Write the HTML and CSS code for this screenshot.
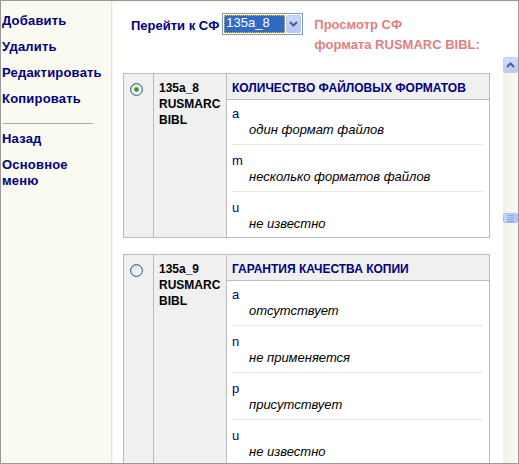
FILE: index.html
```html
<!DOCTYPE html>
<html lang="ru">
<head>
<meta charset="utf-8">
<title>Просмотр СФ</title>
<link rel="stylesheet" href="styles.css">
</head>
<body>
<div class="frame">
  <nav class="sidebar">
    <a class="nav-link" href="#">Добавить</a>
    <a class="nav-link" href="#">Удалить</a>
    <a class="nav-link" href="#">Редактировать</a>
    <a class="nav-link" href="#">Копировать</a>
    <hr class="nav-sep">
    <a class="nav-link" href="#">Назад</a>
    <a class="nav-link" href="#">Основное меню</a>
  </nav>
  <main class="main">
    <header class="topbar">
      <span class="goto-label">Перейти к СФ</span>
      <div class="select">
        <span class="select-value">135a_8</span>
        <span class="select-btn">
          <svg width="9" height="6" viewBox="0 0 9 6"><path d="M1 1 L4.5 4.5 L8 1" fill="none" stroke="#4d6185" stroke-width="2"/></svg>
        </span>
      </div>
      <div class="view-title">Просмотр СФ<br>формата RUSMARC BIBL:</div>
    </header>
    <div class="pane">
      <div class="content">
        <section class="field">
          <div class="cell-radio">
            <svg class="radio" width="13" height="13" viewBox="0 0 13 13">
              <defs><linearGradient id="rg1" x1="0" y1="0" x2="1" y2="1"><stop offset="0" stop-color="#dcdcd7"/><stop offset="1" stop-color="#ffffff"/></linearGradient></defs>
              <circle cx="6.5" cy="6.5" r="5.9" fill="url(#rg1)" stroke="#1c5180" stroke-width="1"/>
              <circle cx="6.5" cy="6.5" r="2.3" fill="#21a121"/>
            </svg>
          </div>
          <div class="cell-code">135a_8<br>RUSMARC<br>BIBL</div>
          <div class="cell-body">
            <div class="field-title">КОЛИЧЕСТВО ФАЙЛОВЫХ ФОРМАТОВ</div>
            <div class="items">
              <div class="item"><div class="item-code">a</div><div class="item-desc">один формат файлов</div></div>
              <div class="item"><div class="item-code">m</div><div class="item-desc">несколько форматов файлов</div></div>
              <div class="item"><div class="item-code">u</div><div class="item-desc">не известно</div></div>
            </div>
          </div>
        </section>
        <section class="field">
          <div class="cell-radio">
            <svg class="radio" width="13" height="13" viewBox="0 0 13 13">
              <defs><linearGradient id="rg2" x1="0" y1="0" x2="1" y2="1"><stop offset="0" stop-color="#dcdcd7"/><stop offset="1" stop-color="#ffffff"/></linearGradient></defs>
              <circle cx="6.5" cy="6.5" r="5.9" fill="url(#rg2)" stroke="#1c5180" stroke-width="1"/>
            </svg>
          </div>
          <div class="cell-code">135a_9<br>RUSMARC<br>BIBL</div>
          <div class="cell-body">
            <div class="field-title">ГАРАНТИЯ КАЧЕСТВА КОПИИ</div>
            <div class="items">
              <div class="item"><div class="item-code">a</div><div class="item-desc">отсутствует</div></div>
              <div class="item"><div class="item-code">n</div><div class="item-desc">не применяется</div></div>
              <div class="item"><div class="item-code">p</div><div class="item-desc">присутствует</div></div>
              <div class="item"><div class="item-code">u</div><div class="item-desc">не известно</div></div>
            </div>
          </div>
        </section>
      </div>
      <div class="scrollbar">
        <div class="sb-btn">
          <svg width="9" height="6" viewBox="0 0 9 6"><path d="M1 5 L4.5 1.5 L8 5" fill="none" stroke="#4d6185" stroke-width="2"/></svg>
        </div>
        <div class="sb-track">
          <div class="sb-thumb"><span></span><span></span><span></span><span></span></div>
        </div>
      </div>
    </div>
  </main>
</div>
</body>
</html>
```
FILE: styles.css
```css
html, body {
  margin: 0;
  padding: 0;
  background: #ffffff;
}
body {
  font-family: "Liberation Sans", Arial, sans-serif;
}
.frame {
  width: 519px;
  height: 464px;
  box-sizing: border-box;
  border: 1px solid #9a9a9a;
  display: flex;
  overflow: hidden;
}
.sidebar {
  width: 109px;
  flex: none;
  background: #fafaf0;
  border-right: 1px solid #e6e6cc;
  box-sizing: content-box;
  padding: 12px 0 0 1px;
  display: flex;
  flex-direction: column;
  align-items: flex-start;
}
.nav-link {
  display: block;
  color: #000080;
  font-weight: bold;
  font-size: 13px;
  letter-spacing: 0.2px;
  line-height: 16px;
  text-decoration: none;
  margin-bottom: 10px;
  width: 90px;
}
.nav-sep {
  width: 90px;
  margin: 6px 0 7px 1px;
  border: 0;
  border-top: 1px solid #a8a8a0;
  height: 0;
}
.main {
  flex: 1;
  display: flex;
  flex-direction: column;
  border-top: 2px solid #f7f7ec;
  border-left: 1px solid #f7f7ec;
  min-width: 0;
}
.topbar {
  height: 54px;
  flex: none;
  display: flex;
  align-items: flex-start;
  padding: 10px 0 0 18px;
  box-sizing: border-box;
}
.goto-label {
  color: #000080;
  font-weight: bold;
  font-size: 13px;
  line-height: 16px;
  margin-top: 5px;
  margin-right: 3px;
}
.select {
  width: 81px;
  height: 22px;
  box-sizing: border-box;
  border: 1px solid #7f9db9;
  background: #fff;
  display: flex;
  align-items: stretch;
  padding: 1px;
  margin-right: 11px;
}
.select-value {
  flex: 1;
  background: #316ac5;
  color: #fff;
  font-size: 13px;
  line-height: 16px;
  padding-left: 2px;
  outline: 1px dotted #e0c060;
  outline-offset: -1px;
  overflow: hidden;
  margin-right: 1px;
}
.select-btn {
  width: 15px;
  background: linear-gradient(#c9d9fd, #b4c8f6);
  border: 1px solid #b9cbf3;
  border-radius: 2px;
  box-sizing: border-box;
  display: flex;
  align-items: center;
  justify-content: center;
}
.view-title {
  color: #e08080;
  font-size: 13px;
  font-weight: bold;
  line-height: 20px;
  margin-top: 2px;
}
.pane {
  flex: 1;
  display: flex;
  min-height: 0;
}
.content {
  flex: 1;
  padding: 16px 13px 0 10px;
  overflow: hidden;
  display: flex;
  flex-direction: column;
  gap: 16px;
}
.field {
  flex: none;
  display: grid;
  grid-template-columns: 30px 73px 1fr;
  border: 1px solid #bcbcbc;
}
.cell-radio {
  background: #f0f0f0;
  border-right: 1px solid #bcbcbc;
  padding: 9px 0 0 6px;
}
.radio {
  display: block;
}
.cell-code {
  background: #f0f0f0;
  border-right: 1px solid #bcbcbc;
  padding: 6px 0 0 5px;
  font-weight: bold;
  font-size: 12px;
  line-height: 16px;
  color: #000;
}
.cell-body {
  background: #fff;
}
.field-title {
  background: #f0f0f0;
  border-bottom: 1px solid #bcbcbc;
  height: 26px;
  box-sizing: border-box;
  padding: 6px 5px 0 5px;
  color: #000080;
  font-weight: bold;
  font-size: 12px;
  line-height: 16px;
}
.items {
  padding: 0 6px 0 5px;
}
.item {
  padding: 8px 0 6px;
  border-bottom: 1px solid #ebe9d8;
}
.item:first-child {
  padding-top: 6px;
}
.item:last-child {
  border-bottom: 0;
  padding-bottom: 5px;
}
.item-code {
  color: #000080;
  font-size: 13px;
  line-height: 16px;
}
.item-desc {
  color: #000;
  font-style: italic;
  font-size: 13px;
  line-height: 16px;
  padding-left: 17px;
}
.scrollbar {
  width: 15px;
  flex: none;
  display: flex;
  flex-direction: column;
  background: linear-gradient(to right, #f3f1e6, #fbfaf6);
}
.sb-btn {
  height: 16px;
  box-sizing: border-box;
  background: linear-gradient(#d2defc, #b6caf7);
  border: 1px solid #c0cff5;
  border-radius: 2px;
  display: flex;
  align-items: center;
  justify-content: center;
}
.sb-track {
  flex: 1;
  padding-top: 140px;
}
.sb-thumb {
  height: 10px;
  box-sizing: border-box;
  background: linear-gradient(to right, #c7d6fb, #b5c9f7);
  border: 1px solid #a8bff0;
  border-radius: 2px;
  display: flex;
  flex-direction: column;
  justify-content: center;
  gap: 1px;
  padding: 0 3px;
}
.sb-thumb span {
  height: 1px;
  background: #8aa6ee;
}
```
